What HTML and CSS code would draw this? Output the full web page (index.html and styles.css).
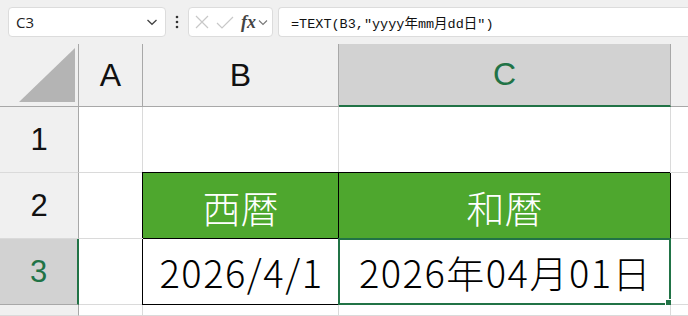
FILE: index.html
```html
<!DOCTYPE html>
<html lang="ja">
  <head>
    <meta charset="UTF-8" />
    <title>Excel – TEXT関数</title>
    <link rel="stylesheet" href="styles.css" />
  </head>
  <body>
    <!-- Barre de formule -->
    <div class="formula-bar">
      <div class="name-box">
        <span>C3</span>
        <svg class="chevron" width="12" height="8" viewBox="0 0 12 8">
          <path d="M1.5 2 L6 6.3 L10.5 2" fill="none" stroke="#444" stroke-width="1.3" />
        </svg>
      </div>
      <div class="dots">
        <svg width="4" height="14" viewBox="0 0 4 14">
          <circle cx="2" cy="2" r="1.3" fill="#333" />
          <circle cx="2" cy="7" r="1.3" fill="#333" />
          <circle cx="2" cy="12" r="1.3" fill="#333" />
        </svg>
      </div>
      <div class="fx-box">
        <svg width="14" height="14" viewBox="0 0 14 14">
          <path d="M1 1 L13 13 M13 1 L1 13" stroke="#c8c8c8" stroke-width="1.2" />
        </svg>
        <svg width="18" height="13" viewBox="0 0 18 13">
          <path d="M1 7 L6 12 L17 1" fill="none" stroke="#c8c8c8" stroke-width="1.2" />
        </svg>
        <span class="fx">fx</span>
        <svg width="10" height="7" viewBox="0 0 10 7">
          <path d="M1 1.5 L5 5.5 L9 1.5" fill="none" stroke="#777" stroke-width="1.1" />
        </svg>
      </div>
      <div class="formula-box">=TEXT(B3,"yyyy年mm月dd日")</div>
    </div>

    <!-- Feuille -->
    <div class="sheet">
      <div class="hdr corner"><div class="tri"></div></div>
      <div class="hdr col">A</div>
      <div class="hdr col">B</div>
      <div class="hdr col active-col">C</div>
      <div class="hdr col rest"></div>

      <div class="hdr row">1</div>
      <div class="cell"></div>
      <div class="cell"></div>
      <div class="cell"></div>
      <div class="cell rest"></div>

      <div class="hdr row">2</div>
      <div class="cell"></div>
      <div class="cell green">西暦</div>
      <div class="cell green">和暦</div>
      <div class="cell rest"></div>

      <div class="hdr row active-row">3</div>
      <div class="cell"></div>
      <div class="cell boxed">2026/4/1</div>
      <div class="cell boxed selected">2026年04月01日<span class="handle"></span></div>
      <div class="cell rest"></div>

      <div class="hdr row"></div>
      <div class="cell"></div>
      <div class="cell"></div>
      <div class="cell"></div>
      <div class="cell rest"></div>
    </div>
  </body>
</html>
```

FILE: styles.css
```css
/* Variables */
:root {
  --bg: #f0f0f0;
  --hdr-line: #a8a8a8;
  --grid-line: #dadada;
  --excel-green: #217346;
  --fill-green: #4ea72e;
  --cell-font: "Noto Sans CJK JP", "Liberation Sans", sans-serif;
}

body {
  margin: 0;
  background: var(--bg);
  width: 688px;
  height: 316px;
  overflow: hidden;
  font-family: "Liberation Sans", sans-serif;
}

/* Barre de formule */
.formula-bar {
  display: flex;
  align-items: stretch;
  height: 30px;
  padding: 7px 0 0 8px;
}

.name-box {
  width: 158px;
  display: flex;
  align-items: center;
  justify-content: space-between;
  background: #fff;
  border: 1px solid #dcdcdc;
  border-radius: 4px;
  padding: 0 7px;
  box-sizing: border-box;
  font-family: "Open Sans", sans-serif;
  font-size: 15px;
  color: #222;
}

.dots {
  width: 22px;
  display: flex;
  align-items: center;
  justify-content: center;
}

.fx-box {
  width: 85px;
  display: flex;
  align-items: center;
  gap: 7px;
  background: #fff;
  border: 1px solid #dcdcdc;
  border-radius: 4px;
  padding: 0 4px 0 6px;
  box-sizing: border-box;
}

.fx {
  font-family: "Liberation Serif", serif;
  font-style: italic;
  font-weight: bold;
  font-size: 18px;
  color: #444;
  margin-right: -5px;
}

.formula-box {
  flex: 1;
  margin-left: 5px;
  background: #fff;
  border: 1px solid #dcdcdc;
  border-right: none;
  border-radius: 4px 0 0 4px;
  padding: 0 12px;
  display: flex;
  align-items: center;
  font-family: "Liberation Mono", "Noto Sans CJK JP", monospace;
  font-size: 13.5px;
  color: #111;
}

/* Grille */
.sheet {
  margin-top: 7px;
  display: grid;
  grid-template-columns: 79px 64px 196px 332px 1fr;
  grid-template-rows: 63px 66px 66px 66px 1fr;
  height: 272px;
}

.hdr {
  background: var(--bg);
  display: flex;
  align-items: center;
  justify-content: center;
  font-size: 32px;
  color: #111;
  box-sizing: border-box;
}

.col {
  border-right: 1px solid var(--hdr-line);
  border-bottom: 1px solid var(--hdr-line);
}

.col.rest {
  border-right: none;
}

.corner {
  border-right: 1px solid var(--hdr-line);
  border-bottom: 1px solid var(--hdr-line);
  justify-content: flex-end;
  align-items: flex-end;
  padding: 0 3px 4px 0;
}

.tri {
  width: 56px;
  height: 54px;
  background: #b4b4b4;
  clip-path: polygon(100% 0, 100% 100%, 0 100%);
}

.active-col {
  background: #d2d2d2;
  color: var(--excel-green);
  border-bottom: 2px solid var(--excel-green);
}

.row {
  border-right: 1px solid var(--hdr-line);
  border-bottom: 1px solid var(--grid-line);
  font-size: 31px;
}

.active-row {
  background: #d2d2d2;
  color: var(--excel-green);
  border-right: 2px solid var(--excel-green);
  border-bottom-color: var(--hdr-line);
}

.cell {
  background: #fff;
  border-right: 1px solid var(--grid-line);
  border-bottom: 1px solid var(--grid-line);
  box-sizing: border-box;
  display: flex;
  align-items: center;
  justify-content: center;
  font-family: var(--cell-font);
  font-weight: 300;
  font-size: 38px;
  color: #000;
  position: relative;
}

.cell.rest {
  border-right: none;
}

/* Bordures noires : droite/bas sur la cellule, gauche/haut par une ombre */
.green {
  background: var(--fill-green);
  color: #fff;
  border-color: #000;
  box-shadow: -1px -1px 0 #000;
  padding-top: 2px;
}

.boxed {
  border-color: #000;
  box-shadow: -1px 0 0 #000;
  letter-spacing: 1.5px;
  padding-left: 2px;
}

.selected {
  border: 2px solid var(--excel-green);
  margin: -1px 0 0 -1px;
  box-shadow: none;
}

.handle {
  position: absolute;
  right: -5px;
  bottom: -5px;
  width: 7px;
  height: 7px;
  background: var(--excel-green);
  border: 1px solid #fff;
}
```
